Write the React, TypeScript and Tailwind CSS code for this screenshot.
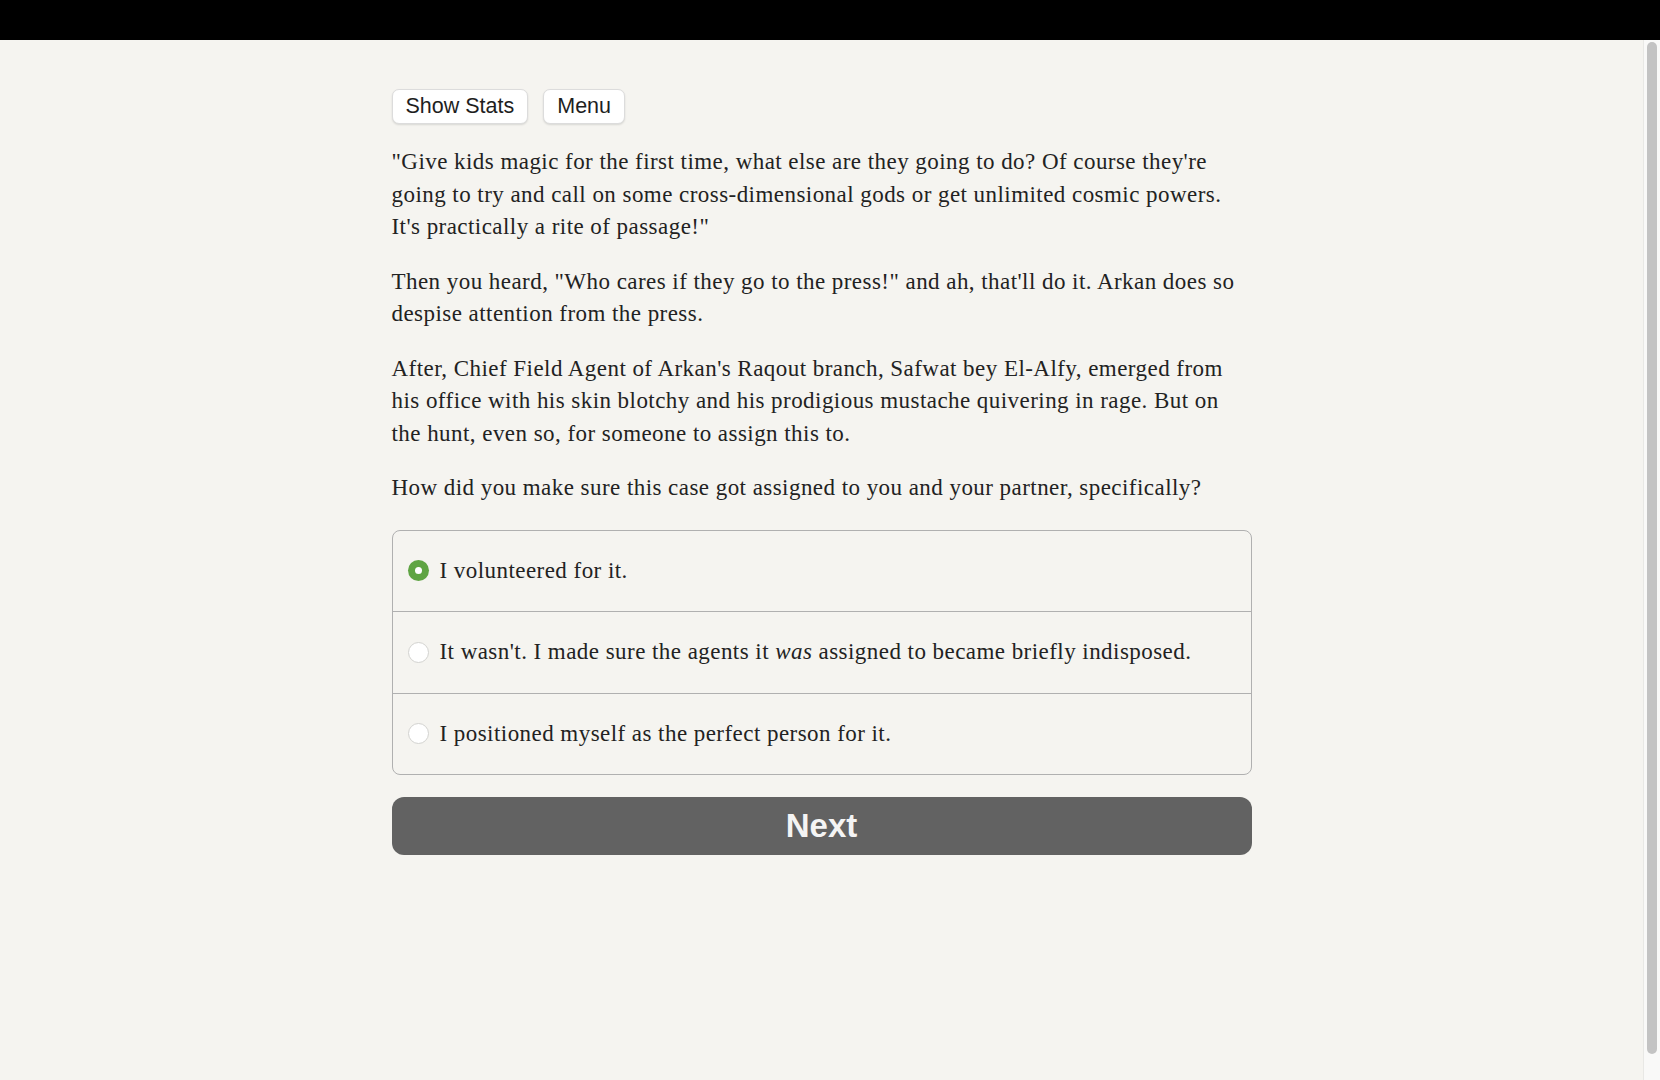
import React, { useState } from 'react';

const PARAGRAPHS: string[] = [
  "\"Give kids magic for the first time, what else are they going to do? Of course they're going to try and call on some cross-dimensional gods or get unlimited cosmic powers. It's practically a rite of passage!\"",
  "Then you heard, \"Who cares if they go to the press!\" and ah, that'll do it. Arkan does so despise attention from the press.",
  "After, Chief Field Agent of Arkan's Raqout branch, Safwat bey El-Alfy, emerged from his office with his skin blotchy and his prodigious mustache quivering in rage. But on the hunt, even so, for someone to assign this to.",
  "How did you make sure this case got assigned to you and your partner, specifically?",
];

const OPTIONS: React.ReactNode[] = [
  'I volunteered for it.',
  <>It wasn't. I made sure the agents it <i>was</i> assigned to became briefly indisposed.</>,
  'I positioned myself as the perfect person for it.',
];

const App: React.FC = () => {
  const [choice, setChoice] = useState(0);

  return (
    <div className="h-screen flex flex-col bg-black">
      <div className="h-[40px] shrink-0 bg-black" />
      <div className="flex-1 flex min-h-0 bg-[#f5f4f0]">
        <div className="flex-1 overflow-hidden">
          <div className="mx-auto w-[860px] pt-[49px]">
            <div className="flex gap-[15px] font-['Liberation_Sans',Arial,sans-serif] text-[21.5px] text-[#1e1e1e]">
              <button className="h-[35px] px-[13px] bg-white border border-[#dcdcdc] rounded-[7px] shadow-[0_1px_2px_rgba(0,0,0,0.12)]">
                Show Stats
              </button>
              <button className="h-[35px] px-[13px] bg-white border border-[#dcdcdc] rounded-[7px] shadow-[0_1px_2px_rgba(0,0,0,0.12)]">
                Menu
              </button>
            </div>

            <div className="mt-[22px] font-['Liberation_Serif',serif] text-[23px] leading-[32.5px] text-[#222] tracking-[0.45px]">
              {PARAGRAPHS.map((p, i) => (
                <p key={i} className="mb-[22px]">{p}</p>
              ))}

              <div className="mt-[25px] border border-[#b0b0b0] rounded-[8px] overflow-hidden">
                {OPTIONS.map((opt, i) => (
                  <label
                    key={i}
                    onClick={() => setChoice(i)}
                    className={`flex items-center py-[24px] pl-[15px] pr-4 cursor-pointer ${i > 0 ? 'border-t border-[#b0b0b0]' : ''}`}
                  >
                    {choice === i ? (
                      <span className="w-[21px] h-[21px] rounded-full bg-[#5fa443] flex items-center justify-center shrink-0">
                        <span className="w-[7px] h-[7px] rounded-full bg-white" />
                      </span>
                    ) : (
                      <span className="w-[21px] h-[21px] rounded-full bg-white border border-[#d3d3d0] shrink-0" />
                    )}
                    <span className="ml-[11px]">{opt}</span>
                  </label>
                ))}
              </div>

              <button className="mt-[22px] w-full h-[58px] rounded-[12px] bg-[#626262] text-[#f4f4f4] font-['Liberation_Sans',Arial,sans-serif] font-bold text-[33px] tracking-normal">
                Next
              </button>
            </div>
          </div>
        </div>

        {/* scrollbar track */}
        <div className="w-[17px] shrink-0 border-l border-[#e8e8e5] bg-[#f9f9f8] pt-[2px] pl-[3px]">
          <div className="w-[10px] h-[1012px] rounded-full bg-[#c3c3c3]" />
        </div>
      </div>
    </div>
  );
};

export default App;
